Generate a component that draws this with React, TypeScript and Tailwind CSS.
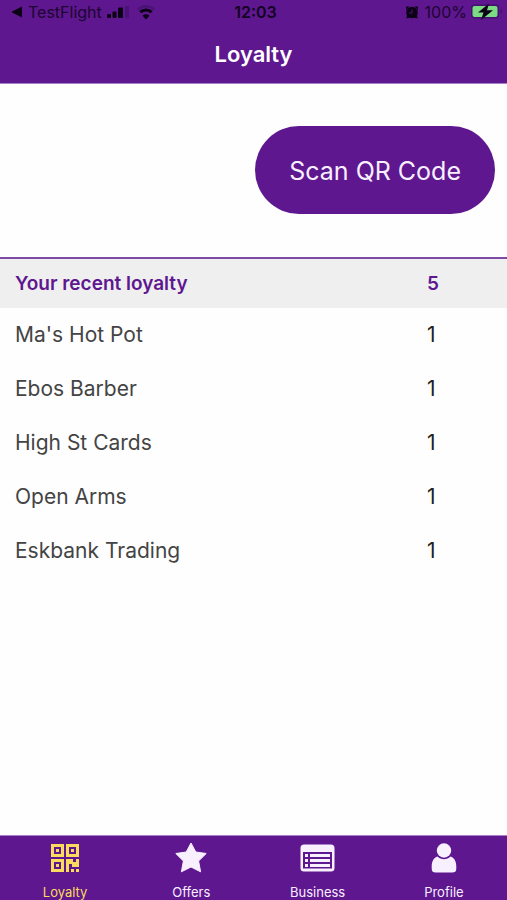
import type { ReactNode } from "react";

const merchants = [
  { name: "Ma's Hot Pot", count: 1 },
  { name: "Ebos Barber", count: 1 },
  { name: "High St Cards", count: 1 },
  { name: "Open Arms", count: 1 },
  { name: "Eskbank Trading", count: 1 },
];

function StatusBar() {
  return (
    <div className="grid h-6 grid-cols-[1fr_auto_1fr] items-center pr-1 pl-2 text-[16px] leading-6 text-[#1c0530]">
      <div className="flex items-center">
        <svg className="ml-1 h-3 w-3" viewBox="0 0 12 12" fill="#0c0216" aria-hidden="true">
          <path d="M-1 6 10 0.500v11z" />
        </svg>
        <span className="ml-1">TestFlight</span>
        <svg className="ml-1 h-3 w-6" viewBox="0 0 24 12" aria-hidden="true">
          <g fill="#0c0216">
            <rect x="1" y="8" width="4" height="4" rx="1" />
            <rect x="6.500" y="5.500" width="4" height="6.500" rx="1" />
            <rect x="12" y="1.500" width="5" height="10.500" rx="1" />
          </g>
          <rect x="19" y="0" width="4" height="12" rx="1" fill="#4b1277" />
        </svg>
        <svg className="ml-1.5 h-4 w-5" viewBox="0 0 20 16" fill="none" aria-hidden="true">
          <path d="M2 5.500a11.500 11.500 0 0 1 16 0" stroke="#4b1277" strokeWidth="2.500" />
          <path d="M4.300 8.300a8 8 0 0 1 11.400 0" stroke="#0c0216" strokeWidth="3" />
          <path d="M6.500 11.700a5 5 0 0 1 7 0L10 15.500z" fill="#0c0216" />
        </svg>
      </div>
      <span className="font-semibold text-[#12031f]">12:03</span>
      <div className="flex items-center justify-end">
        <svg className="h-[14px] w-[14px]" viewBox="0 0 14 14" aria-hidden="true">
          <g fill="#0c0216">
            <circle cx="7" cy="7.500" r="5.800" />
            <path d="M1 1.500h3.500L1 5zM13 1.500H9.500L13 5zM1.500 13.500 2 9l3.500 3.500zM12.500 13.500 12 9l-3.500 3.500z" />
          </g>
          <path d="M7 4.500v3.500H4" fill="none" stroke="#4b1277" strokeWidth="1" />
        </svg>
        <span className="ml-1.5">100%</span>
        <svg className="ml-1 h-4 w-8" viewBox="0 0 32 16" aria-hidden="true">
          <rect x="0" y="0.500" width="28" height="14" rx="3.500" fill="#451071" />
          <rect x="1.500" y="2" width="25" height="11" rx="2" fill="#7bdc83" />
          <path d="M29.500 5c2 .5 2 4.500 0 5z" fill="#451071" />
          <path d="M18 -0.500 7 8.500h5.500L10 16 22 6.300h-6z" fill="#0c0216" />
        </svg>
      </div>
    </div>
  );
}

function QrIcon() {
  return (
    <svg className="h-7 w-7" viewBox="0 0 28 28" fill="currentColor" aria-hidden="true">
      <path
        fillRule="evenodd"
        d="M0 0h13v13H0zM3 3v7h7V3zM15 0h13v13H15zM18 3v7h7V3zM0 15h13v13H0zM3 18v7h7v-7z"
      />
      <path d="M5 5h3v3H5zM20 5h3v3h-3zM5 20h3v3H5zM15 15h7v3h3v-3h3v8h-7v-3h-3v8h-3zM20 25h3v3h-3zM25 25h3v3h-3z" />
    </svg>
  );
}

function StarIcon() {
  return (
    <svg className="h-8 w-8" viewBox="0 0 32 32" fill="currentColor" stroke="currentColor" strokeLinejoin="round" aria-hidden="true">
      <path d="m16 1 4.800 9 10.400 1.500-7.600 7.500 2 10.800L16 25l-9.600 4.800 2-10.800L.8 11.500 11.200 10z" />
    </svg>
  );
}

function ListIcon() {
  return (
    <svg className="h-7 w-9" viewBox="0 0 36 28" fill="currentColor" aria-hidden="true">
      <path
        fillRule="evenodd"
        d="M4 0.500h27a3.500 3.500 0 0 1 3.500 3.500v20a3.500 3.500 0 0 1-3.500 3.500H4A3.500 3.500 0 0 1 .5 24V4A3.500 3.500 0 0 1 4 .5zM3 8v16.500h29V8z"
      />
      <path d="M5 10h3v3H5zM10 10h20v3H10zM5 15h3v3H5zM10 15h20v3H10zM5 20h3v3H5zM10 20h20v3H10z" />
    </svg>
  );
}

function PersonIcon() {
  return (
    <svg className="h-[30px] w-7" viewBox="0 0 28 30" fill="currentColor" aria-hidden="true">
      <circle cx="14" cy="7.500" r="7.200" />
      <path d="M7.500 13.500c3.500 3.500 9.500 3.500 13 0 3.500 1 5.800 4.500 5.800 10v2c0 3-1.500 4-4 4H5.700c-2.500 0-4-1-4-4v-2c0-5.500 2.300-9 5.800-10z" />
    </svg>
  );
}

const tabs: { label: string; icon: ReactNode; active?: boolean }[] = [
  { label: "Loyalty", icon: <QrIcon />, active: true },
  { label: "Offers", icon: <StarIcon /> },
  { label: "Business", icon: <ListIcon /> },
  { label: "Profile", icon: <PersonIcon /> },
];

export default function App() {
  return (
    <div className="flex min-h-screen flex-col bg-[#fefefe] font-['Inter','Liberation_Sans',sans-serif]">
      <header className="border-b border-[#a780c5] bg-[#5e178f]">
        <StatusBar />
        <h1 className="pt-4 pb-[15px] text-center text-[22px] leading-7 font-semibold text-white">
          Loyalty
        </h1>
      </header>

      <main className="flex-1">
        <div className="flex justify-end px-3 pt-[42px] pb-[43px]">
          <button
            type="button"
            className="rounded-full bg-[#5e178f] px-[34px] pt-[29px] pb-[27px] text-[25px] leading-8 text-[#f8efff]"
          >
            Scan QR Code
          </button>
        </div>

        <table className="w-full border-t-2 border-[#7d4ba5] text-left">
          <thead className="bg-[#efefef] text-[19px] leading-6 text-[#5e178f]">
            <tr>
              <th scope="col" className="pt-[13px] pb-3 pl-[15px] font-semibold">
                Your recent loyalty
              </th>
              <th scope="col" className="w-20 pt-[13px] pb-3 font-semibold">
                5
              </th>
            </tr>
          </thead>
          <tbody className="text-[21px] leading-[26px]">
            {merchants.map((merchant) => (
              <tr key={merchant.name}>
                <td className="py-[14px] pl-[15px] text-[#444444]">{merchant.name}</td>
                <td className="text-[#222222]">{merchant.count}</td>
              </tr>
            ))}
          </tbody>
        </table>
      </main>

      <nav className="grid grid-cols-4 border-t border-[#a780c5] bg-[#5e178f] pl-0.5">
        {tabs.map((tab) => (
          <a
            key={tab.label}
            href={`#${tab.label.toLowerCase()}`}
            aria-current={tab.active ? "page" : undefined}
            className={
              tab.active
                ? "flex flex-col items-center text-[#f9dc5c]"
                : "flex flex-col items-center text-[#f8efff]"
            }
          >
            <span className="flex h-12 items-center pb-1">{tab.icon}</span>
            <span className="text-[13px] leading-4">{tab.label}</span>
          </a>
        ))}
      </nav>
    </div>
  );
}
